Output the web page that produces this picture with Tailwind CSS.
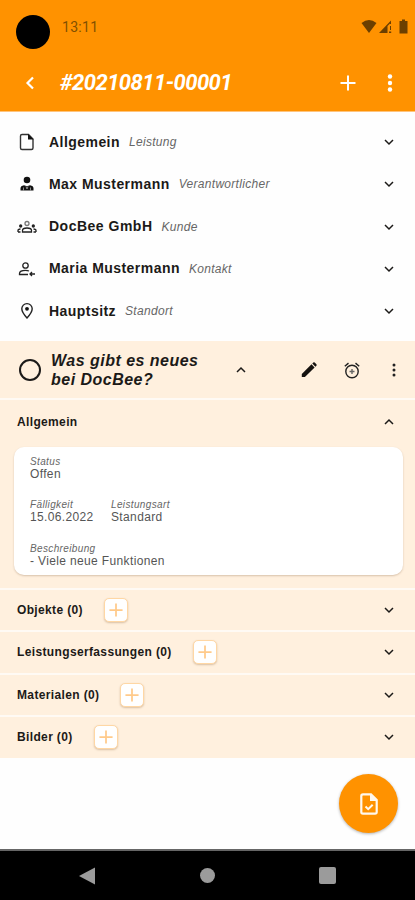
<!DOCTYPE html>
<html lang="de">
<head>
<meta charset="utf-8">
<title>DocBee</title>
<script src="https://cdn.jsdelivr.net/npm/@tailwindcss/browser@4"></script>
</head>
<body class="bg-white">
<svg class="hidden">
  <symbol id="down" viewBox="0 0 12 12"><path d="M2 4l4 4 4-4" fill="none" stroke="currentColor" stroke-width="1.5"/></symbol>
  <symbol id="up" viewBox="0 0 12 12"><path d="M2 8l4-4 4 4" fill="none" stroke="currentColor" stroke-width="1.5"/></symbol>
  <symbol id="plus" viewBox="0 0 16 16"><path d="M8 .5v15M.5 8h15" fill="none" stroke="currentColor" stroke-width="2"/></symbol>
</svg>
<div class="w-[415px] h-[900px] flex flex-col bg-[#fefefe] overflow-hidden relative font-['Liberation_Sans',Arial,sans-serif] text-[#1c1a18]">
  <header class="h-[112px] shrink-0 bg-[#ff9200] border-b border-[#ffc47c]">
    <div class="h-[54px] flex items-start pl-4 pr-[7px]">
      <div class="size-[34px] mt-[15px] rounded-full bg-black"></div>
      <div class="mt-[18px] ml-3 text-[14px] leading-[18px] tracking-[0.3px] font-['Roboto',sans-serif] text-[#815000]">13:11</div>
      <div class="ml-auto mt-[19px] flex items-center text-[#6b3f00]">
        <svg class="w-4 h-[15px]" viewBox="0 0 16 15" fill="currentColor"><path d="M.5 4Q8-2.200 15.500 4L8 14z"/></svg>
        <svg class="w-[13px] h-[15px] ml-[2px]" viewBox="0 0 13 15" fill="currentColor"><path d="M0 14L12 1.500V5H11V4.500L8.500 7v7zM11 7h1v4h-1zM10 12.500h2.200V14H10z"/></svg>
        <svg class="w-[9px] h-[15px] ml-[7px]" viewBox="0 0 9 15" fill="currentColor"><path d="M3 .5h3V2h2.500v12.500h-8V2H3z"/></svg>
      </div>
    </div>
    <div class="h-[58px] flex items-center pl-[24px] pr-[22px] text-white">
      <svg class="w-3 h-[14px]" viewBox="0 0 12 14"><path d="M9 1.500L3.500 7 9 12.500" fill="none" stroke="currentColor" stroke-width="2.200"/></svg>
      <h1 class="ml-6 text-[22px] leading-7 font-bold italic tracking-[-0.55px] whitespace-nowrap font-['Roboto',sans-serif]">#20210811-00001</h1>
      <svg class="size-4 ml-auto"><use href="#plus"/></svg>
      <svg class="w-[6px] h-[18px] ml-[31px]" viewBox="0 0 6 18" fill="currentColor"><circle cx="3" cy="2.500" r="2.200"/><circle cx="3" cy="9" r="2.200"/><circle cx="3" cy="15.500" r="2.200"/></svg>
    </div>
  </header>

  <main class="flex flex-col">
    <section class="pt-[9px] h-[229px] text-[14px]">
      <div class="h-[42.25px] flex items-center pl-[17px] pr-5">
        <svg class="size-5" viewBox="0 0 20 20"><path d="M5 2.500h6.500L16 7v9q0 1.500-1.500 1.500H5Q3.500 17.500 3.500 16V4Q3.500 2.500 5 2.500z" fill="none" stroke="#333" stroke-width="1.400"/><path d="M11 2l5.500 5.500H11z" fill="#111"/></svg>
        <b class="ml-3 tracking-[0.45px]">Allgemein</b><i class="ml-[9px] text-[12px] tracking-[0.3px] text-[#666]">Leistung</i>
        <svg class="size-3 ml-auto"><use href="#down"/></svg>
      </div>
      <div class="h-[42.25px] flex items-center pl-[17px] pr-5">
        <svg class="size-5" viewBox="0 0 20 20" fill="#111"><circle cx="10" cy="6" r="3.300"/><path d="M3.500 16.500v-2.300q0-2.500 3.500-3l3 1 3-1q3.500.5 3.500 3v2.300z"/><path d="M6.500 13.500v3M13.500 13.500v3M9 12.500l1 2.500 1-2.500" fill="none" stroke="#aaa" stroke-width=".8"/></svg>
        <b class="ml-3 tracking-[0.45px]">Max Mustermann</b><i class="ml-[9px] text-[12px] tracking-[0.3px] text-[#666]">Verantwortlicher</i>
        <svg class="size-3 ml-auto"><use href="#down"/></svg>
      </div>
      <div class="h-[42.25px] flex items-center pl-[17px] pr-5">
        <svg class="size-5" viewBox="0 0 20 20" fill="none" stroke="#222" stroke-width="1.300"><circle cx="10" cy="6.500" r="2" stroke="#777"/><path d="M5.500 15v-1.500q0-2.500 4.500-2.500t4.500 2.500V15zM1 15v-1.500q0-1.300 2.500-1.500M19 15v-1.500q0-1.300-2.500-1.500M1 15h2.500M19 15h-2.500"/><circle cx="3.700" cy="9" r="1" fill="#222"/><circle cx="16.300" cy="9" r="1" fill="#222"/></svg>
        <b class="ml-3 tracking-[0.5px]">DocBee GmbH</b><i class="ml-[9px] text-[12px] tracking-[0.3px] text-[#666]">Kunde</i>
        <svg class="size-3 ml-auto"><use href="#down"/></svg>
      </div>
      <div class="h-[42.25px] flex items-center pl-[17px] pr-5">
        <svg class="size-5" viewBox="0 0 20 20" fill="none" stroke="#222" stroke-width="1.300"><circle cx="8.500" cy="6.500" r="2.700"/><path d="M12 12Q10.500 11.300 8.500 11.300q-6 0-6 3.200v1H11"/><path d="M13 15h5M15 13l-2 2 2 2"/></svg>
        <b class="ml-3 tracking-[0.45px]">Maria Mustermann</b><i class="ml-[9px] text-[12px] tracking-[0.3px] text-[#666]">Kontakt</i>
        <svg class="size-3 ml-auto"><use href="#down"/></svg>
      </div>
      <div class="h-[42.25px] flex items-center pl-[17px] pr-5">
        <svg class="size-5" viewBox="0 0 20 20"><path d="M10 17q-5.200-5.700-5.200-9.200a5.200 5.200 0 0 1 10.400 0Q15.200 11.300 10 17z" fill="none" stroke="#222" stroke-width="1.400"/><circle cx="10" cy="7.800" r="1.900" fill="#111"/></svg>
        <b class="ml-3 tracking-[0.45px]">Hauptsitz</b><i class="ml-[9px] text-[12px] tracking-[0.3px] text-[#666]">Standort</i>
        <svg class="size-3 ml-auto"><use href="#down"/></svg>
      </div>
    </section>

    <section class="bg-[#fff0de] text-[12px] font-bold">
      <div class="h-[59px] pt-px flex items-center pl-[19px] pr-[19px] border-b-2 border-[#fffaf4]">
        <div class="size-[22px] rounded-full border-2 border-[#1c1a18]"></div>
        <h2 class="ml-[10px] w-[160px] italic text-[16px] leading-[19px] tracking-[0.48px] whitespace-nowrap">Was gibt es neues<br>bei DocBee?</h2>
        <svg class="size-3 ml-[24px]"><use href="#up"/></svg>
        <svg class="size-4 ml-[54px]" viewBox="0 0 16 16" fill="#15120f"><path d="M.8 12L10.500 2.300l3.100 3.100L3.900 15.100H.8zM11.300 1.600l1-1q.7-.6 1.400 0l1.700 1.700q.6.700 0 1.400l-1 1z"/></svg>
        <svg class="w-4 h-[17px] ml-[27px]" viewBox="0 0 16 17" fill="none" stroke="#222" stroke-width="1.400"><circle cx="8" cy="9.500" r="6.200"/><path d="M.8 4.200L4.500 1.100M15.200 4.200L11.500 1.100"/><path d="M8 7v5M5.500 9.500h5" stroke="#666"/></svg>
        <svg class="w-1 h-[14px] ml-auto" viewBox="0 0 4 14" fill="#222"><circle cx="2" cy="2" r="1.500"/><circle cx="2" cy="7" r="1.500"/><circle cx="2" cy="12" r="1.500"/></svg>
      </div>
      <div class="h-[190px] border-b-2 border-[#fffaf4]">
        <div class="h-[43px] pl-[17px] pr-5 flex items-center"><span class="tracking-[0.35px]">Allgemein</span><svg class="size-3 ml-auto"><use href="#up"/></svg></div>
        <div class="ml-[14px] mr-3 mt-1 h-[128px] rounded-[10px] bg-white shadow-[0_1px_2px_rgba(100,60,20,0.25)] pl-[16px] pt-[8px] font-normal text-[#555] tracking-[0.36px] leading-[13px] flex flex-col gap-[17.3px]">
          <div><i class="block text-[10px] text-[#666]">Status</i>Offen</div>
          <div class="flex"><div class="w-[81px]"><i class="block text-[10px] text-[#666]">Fälligkeit</i>15.06.2022</div><div><i class="block text-[10px] text-[#666]">Leistungsart</i>Standard</div></div>
          <div><i class="block text-[10px] text-[#666]">Beschreibung</i>- Viele neue Funktionen</div>
        </div>
      </div>
      <div class="h-[42.25px] pl-[17px] pr-5 flex items-center border-b-2 border-[#fffaf4]"><span class="tracking-[0.35px]">Objekte (0)</span><span class="ml-[21px] size-6 rounded-[5px] bg-white border border-[#ffd7a4] shadow-[0_1px_2px_rgba(130,80,30,0.3)] flex items-center justify-center text-[#ffca8a]"><svg class="size-[14px]"><use href="#plus"/></svg></span><svg class="size-3 ml-auto"><use href="#down"/></svg></div>
      <div class="h-[42.25px] pl-[17px] pr-5 flex items-center border-b-2 border-[#fffaf4]"><span class="tracking-[0.36px]">Leistungserfassungen (0)</span><span class="ml-[21px] size-6 rounded-[5px] bg-white border border-[#ffd7a4] shadow-[0_1px_2px_rgba(130,80,30,0.3)] flex items-center justify-center text-[#ffca8a]"><svg class="size-[14px]"><use href="#plus"/></svg></span><svg class="size-3 ml-auto"><use href="#down"/></svg></div>
      <div class="h-[42.25px] pl-[17px] pr-5 flex items-center border-b-2 border-[#fffaf4]"><span class="tracking-[0.36px]">Materialen (0)</span><span class="ml-[21px] size-6 rounded-[5px] bg-white border border-[#ffd7a4] shadow-[0_1px_2px_rgba(130,80,30,0.3)] flex items-center justify-center text-[#ffca8a]"><svg class="size-[14px]"><use href="#plus"/></svg></span><svg class="size-3 ml-auto"><use href="#down"/></svg></div>
      <div class="h-[41.25px] pl-[17px] pr-5 flex items-center"><span class="tracking-[0.36px]">Bilder (0)</span><span class="ml-[21px] size-6 rounded-[5px] bg-white border border-[#ffd7a4] shadow-[0_1px_2px_rgba(130,80,30,0.3)] flex items-center justify-center text-[#ffca8a]"><svg class="size-[14px]"><use href="#plus"/></svg></span><svg class="size-3 ml-auto"><use href="#down"/></svg></div>
    </section>
  </main>

  <button class="absolute right-[17px] bottom-[67px] size-[59px] rounded-full bg-[#ff9200] shadow-[0_1px_3px_rgba(0,0,0,0.3)] flex items-center justify-center">
    <svg class="w-[18px] h-[22px]" viewBox="0 0 18 22"><path d="M3 1.300h8L16.700 7v12q0 1.700-1.700 1.700H3Q1.300 20.700 1.300 19V3Q1.300 1.300 3 1.300z" fill="none" stroke="#fff8ee" stroke-width="2.200"/><path d="M10 1v7h7z" fill="#fff8ee"/><path d="M5.500 13.500l2.700 2.700 4.500-4.500" fill="none" stroke="#fff8ee" stroke-width="2"/></svg>
  </button>

  <nav class="mt-auto h-[51px] shrink-0 bg-black border-t-2 border-[#666]">
    <div class="flex items-center h-full pl-[79px] pr-[79px] justify-between text-[#9b9b9b]">
      <svg class="w-4 h-[18px]" viewBox="0 0 16 18" fill="currentColor"><path d="M0 9L16 .5v17z"/></svg>
      <span class="size-[15px] rounded-full bg-current"></span>
      <span class="size-[17px] rounded-[2px] bg-current"></span>
    </div>
  </nav>
</div>
</body>
</html>
